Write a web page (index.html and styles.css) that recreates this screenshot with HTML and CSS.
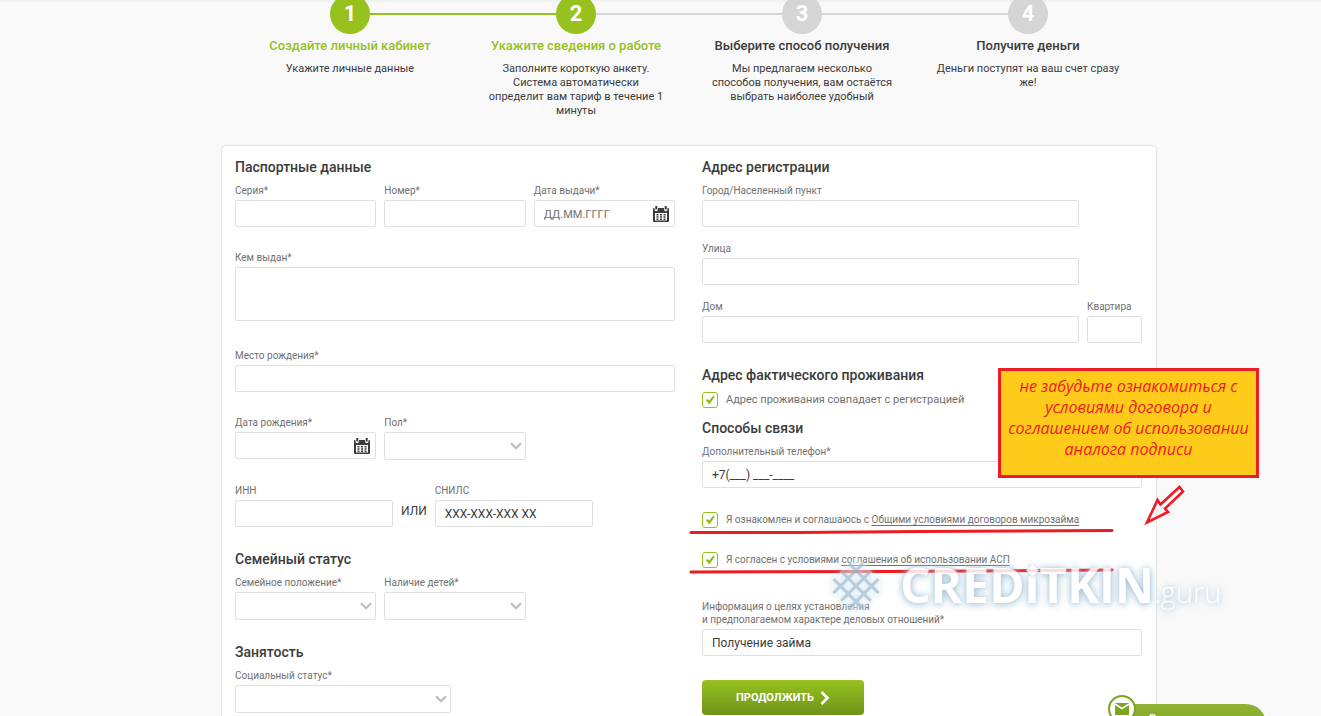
FILE: index.html
```html
<!DOCTYPE html>
<html lang="ru">
<head>
<meta charset="utf-8">
<meta name="viewport" content="width=device-width, initial-scale=1">
<title>Сведения о работе</title>
<link rel="stylesheet" href="styles.css">
</head>
<body>
<svg class="defs" width="0" height="0" aria-hidden="true">
  <symbol id="calendar" viewBox="0 0 16 16">
    <path fill="#3b3b3b" d="M1 2h.5v1.500a1.500 1.500 0 0 0 3.500 0V2h6v1.500a1.500 1.500 0 0 0 3.500 0V2h.5a1 1 0 0 1 1 1v12a1 1 0 0 1-1 1H1a1 1 0 0 1-1-1V3a1 1 0 0 1 1-1z"/>
    <path fill="#3b3b3b" d="M2.300 0h2v3.500h-2zM11.700 0h2v3.500h-2z"/>
    <path fill="#fff" d="M2 7h12v7.500H2z"/>
    <path fill="#3b3b3b" d="M3.500 8h2v1.500h-2zM7 8h2v1.500H7zM10.500 8h2v1.500h-2zM3.500 10.200h2v1.500h-2zM7 10.200h2v1.500H7zM10.500 10.200h2v1.500h-2zM3.500 12.400h2v1.500h-2zM7 12.400h2v1.500H7zM10.500 12.400h2v1.500h-2z"/>
  </symbol>
  <symbol id="chevron" viewBox="0 0 12 8">
    <path d="M1 1.200l5 5 5-5" fill="none" stroke="#bdbdbd" stroke-width="2.200"/>
  </symbol>
  <symbol id="tick" viewBox="0 0 16 16">
    <path d="M3.800 8.300l1.600-1.300 1.800 1.600L11 4l1.900.4-5.500 8.100z" fill="#8bbb1c"/>
  </symbol>
</svg>

<main class="page">
  <ol class="steps">
    <li class="step step-done step-linked">
      <span class="step-num">1</span>
      <h2 class="step-title">Создайте личный кабинет</h2>
      <p class="step-text">Укажите личные данные</p>
    </li>
    <li class="step step-done">
      <span class="step-num">2</span>
      <h2 class="step-title">Укажите сведения о работе</h2>
      <p class="step-text">Заполните короткую анкету.<br>Система автоматически<br>определит вам тариф в течение 1<br>минуты</p>
    </li>
    <li class="step">
      <span class="step-num">3</span>
      <h2 class="step-title">Выберите способ получения</h2>
      <p class="step-text">Мы предлагаем несколько<br>способов получения, вам остаётся<br>выбрать наиболее удобный</p>
    </li>
    <li class="step">
      <span class="step-num">4</span>
      <h2 class="step-title">Получите деньги</h2>
      <p class="step-text">Деньги поступят на ваш счет сразу<br>же!</p>
    </li>
  </ol>

  <form class="card">
    <div class="column">
      <h3 class="heading">Паспортные данные</h3>
      <div class="row thirds">
        <div class="field"><label for="series">Серия*</label><input class="control" id="series" type="text"></div>
        <div class="field"><label for="number">Номер*</label><input class="control" id="number" type="text"></div>
        <div class="field"><label for="issued">Дата выдачи*</label>
          <div class="control-wrap"><input class="control" id="issued" type="text" placeholder="ДД.ММ.ГГГГ"><svg class="calendar"><use href="#calendar"/></svg></div></div>
      </div>
      <div class="row row-area">
        <div class="field"><label for="issuer">Кем выдан*</label><textarea class="control area" id="issuer"></textarea></div>
      </div>
      <div class="row">
        <div class="field"><label for="birthplace">Место рождения*</label><input class="control" id="birthplace" type="text"></div>
      </div>
      <div class="row thirds">
        <div class="field"><label for="birthday">Дата рождения*</label>
          <div class="control-wrap"><input class="control" id="birthday" type="text"><svg class="calendar"><use href="#calendar"/></svg></div></div>
        <div class="field"><label for="sex">Пол*</label>
          <div class="control-wrap"><select class="control select" id="sex"><option></option></select><svg class="chevron"><use href="#chevron"/></svg></div></div>
      </div>
      <div class="row ids">
        <div class="field"><label for="inn">ИНН</label><input class="control" id="inn" type="text"></div>
        <span class="or">ИЛИ</span>
        <div class="field"><label for="snils">СНИЛС</label><input class="control" id="snils" type="text" value="XXX-XXX-XXX XX"></div>
      </div>
      <h3 class="heading">Семейный статус</h3>
      <div class="row thirds">
        <div class="field"><label for="marital">Семейное положение*</label>
          <div class="control-wrap"><select class="control select" id="marital"><option></option></select><svg class="chevron"><use href="#chevron"/></svg></div></div>
        <div class="field"><label for="children">Наличие детей*</label>
          <div class="control-wrap"><select class="control select" id="children"><option></option></select><svg class="chevron"><use href="#chevron"/></svg></div></div>
      </div>
      <h3 class="heading">Занятость</h3>
      <div class="row halves">
        <div class="field"><label for="social">Социальный статус*</label>
          <div class="control-wrap"><select class="control select" id="social"><option></option></select><svg class="chevron"><use href="#chevron"/></svg></div></div>
      </div>
    </div>

    <div class="column">
      <h3 class="heading">Адрес регистрации</h3>
      <div class="row address">
        <div class="field"><label for="city">Город/Населенный пункт</label><input class="control" id="city" type="text"></div>
      </div>
      <div class="row address">
        <div class="field"><label for="street">Улица</label><input class="control" id="street" type="text"></div>
      </div>
      <div class="row address">
        <div class="field"><label for="house">Дом</label><input class="control" id="house" type="text"></div>
        <div class="field"><label for="flat">Квартира</label><input class="control" id="flat" type="text"></div>
      </div>
      <h3 class="heading">Адрес фактического проживания</h3>
      <label class="check check-large"><span class="tickbox"><input type="checkbox" checked><svg><use href="#tick"/></svg></span><span>Адрес проживания совпадает с регистрацией</span></label>
      <h3 class="heading heading-contact">Способы связи</h3>
      <div class="row">
        <div class="field"><label for="phone">Дополнительный телефон*</label><input class="control" id="phone" type="text" value="+7(___) ___-____"></div>
      </div>
      <div class="agreements">
        <label class="check"><span class="tickbox"><input type="checkbox" checked><svg><use href="#tick"/></svg></span><span>Я ознакомлен и соглашаюсь с <a href="#terms">Общими условиями договоров микрозайма</a></span></label>
        <label class="check"><span class="tickbox"><input type="checkbox" checked><svg><use href="#tick"/></svg></span><span>Я согласен с условиями <a href="#asp">соглашения об использовании АСП</a></span></label>
      </div>
      <div class="field purpose"><label for="purpose">Информация о целях установления<br>и предполагаемом характере деловых отношений*</label><input class="control" id="purpose" type="text" value="Получение займа"></div>
      <button class="submit" type="button">ПРОДОЛЖИТЬ
        <svg width="10" height="14" viewBox="0 0 10 14"><path d="M1.500 1l6 6-6 6" fill="none" stroke="#fff" stroke-width="2.600"/></svg>
      </button>
    </div>
  </form>

  <svg class="marks" width="500" height="96" viewBox="0 0 500 96" aria-hidden="true">
    <g fill="none" stroke="#ed1c24">
      <path stroke-width="3" stroke-linecap="round" d="M2 52.500L110 52.500 230 51.500 423 50.500M2 92L200 91.500 423 90"/>
      <path stroke-width="2.600" d="M490.500 7l3.500 4.500-18 17 3 3.500-21 10.500 10.500-22.500 3 4.500z"/>
    </g>
  </svg>
  <p class="callout">не забудьте ознакомиться с<br>условиями договора и<br>соглашением об использовании<br>аналога подписи</p>

  <div class="watermark">
    <svg class="watermark-logo" width="64" height="64" viewBox="0 0 64 64" aria-hidden="true">
      <path d="M32 2l30 30-30 30L2 32z" fill="#fff" opacity=".3"/>
      <g fill="none" stroke="#9dbdd2" stroke-width="3" opacity=".85" transform="rotate(45 32 32)">
        <path d="M21 11v42M32 11v42M43 11v42M11 21h42M11 32h42M11 43h42"/>
      </g>
    </svg>
    <span class="watermark-name">CRED<span class="watermark-i">ı</span>TKIN</span><span class="watermark-zone">.guru</span>
  </div>

  <button class="chat" type="button">
    <span class="chat-icon"><svg width="14" height="12" viewBox="0 0 14 12"><path d="M0 0h14v12H0z" fill="#7da61f"/><path d="M0 1l7 4.500L14 1" fill="none" stroke="#fff" stroke-width="1.500"/></svg></span>
    <span class="chat-text">Отправить</span>
  </button>
</main>
</body>
</html>
```

FILE: styles.css
```css
* {
  box-sizing: border-box;
}

body {
  margin: 0;
  height: 100vh;
  overflow: hidden;
  padding: 0 0 0 57px;
  background: #f9f9f9;
  box-shadow: inset 0 3px 3px -2px #ececec;
  color: #3b3b3b;
  font-family: Roboto, "Liberation Sans", sans-serif;
  font-size: 12px;
}

.defs {
  position: absolute;
}

h2,
h3,
p {
  margin: 0;
}

.page {
  position: relative;
  max-width: 936px;
  margin: 0 auto;
}

/* Progress */
.steps {
  display: grid;
  grid-template-columns: repeat(4, 1fr);
  min-height: 145px;
  margin: 0;
  padding: 0 16px;
  list-style: none;
  text-align: center;
}

.step {
  position: relative;
  margin-top: -6px;
}

.step:not(:last-child)::after {
  content: "";
  position: absolute;
  top: 19px;
  left: calc(50% + 20px);
  width: calc(100% - 40px);
  height: 2px;
  background: #d5d5d5;
}

.step-linked:not(:last-child)::after {
  background: #96c11f;
}

.step-num {
  display: block;
  width: 40px;
  height: 40px;
  margin: 0 auto;
  border-radius: 50%;
  background: #d5d5d5;
  color: #fff;
  font-size: 22px;
  font-weight: 700;
  line-height: 40px;
}

.step-done .step-num {
  background: #96c11f;
}

.step-title {
  margin-top: 3px;
  font-size: 13px;
  font-weight: 500;
  line-height: 18px;
}

.step-done .step-title {
  color: #96c11f;
}

.step-text {
  margin-top: 7px;
  font-size: 11px;
  line-height: 14px;
}

/* Form */
.card {
  display: grid;
  grid-template-columns: 1fr 1fr;
  gap: 27px;
  padding: 11px 14px 40px 13px;
  border: 1px solid #e4e4e4;
  border-radius: 5px;
  background: #fff;
}

.heading {
  margin: 22px 0 7px;
  font-size: 14px;
  font-weight: 500;
  line-height: 20px;
}

.heading:first-child {
  margin-top: 0;
}

.row {
  display: grid;
  align-items: start;
  gap: 8px;
}

.row + .row {
  margin-top: 24px;
}

.row-area + .row {
  margin-top: 28px;
}

.thirds {
  grid-template-columns: repeat(3, 1fr);
}

.halves {
  grid-template-columns: 216px;
}

.ids {
  grid-template-columns: 158px auto 158px;
  justify-content: start;
}

.or {
  align-self: end;
  padding-bottom: 8px;
  line-height: 15px;
}

.address {
  grid-template-columns: 1fr 55px;
}

.address + .address {
  margin-top: 15px;
}

.field > label {
  display: block;
  margin-bottom: 2px;
  color: #707070;
  font-size: 10px;
  line-height: 14px;
  white-space: nowrap;
}

.control {
  display: block;
  width: 100%;
  height: 27px;
  margin: 0;
  padding: 0 9px;
  border: 1px solid #e0e0e0;
  border-radius: 2px;
  background: #fff;
  color: #3b3b3b;
  font: 12px Roboto, "Liberation Sans", sans-serif;
  outline: 0;
}

.control::placeholder {
  color: #707070;
  font-size: 11px;
}

.area {
  height: 54px;
  resize: none;
}

.select {
  height: 28px;
  appearance: none;
}

.control-wrap {
  position: relative;
}

.calendar {
  position: absolute;
  top: 6px;
  right: 6px;
  width: 16px;
  height: 16px;
}

.chevron {
  position: absolute;
  top: 10px;
  right: 4px;
  width: 12px;
  height: 8px;
  pointer-events: none;
}

.check {
  display: flex;
  align-items: flex-start;
  gap: 8px;
  height: 16px;
  color: #707070;
  font-size: 10px;
  line-height: 15px;
  white-space: nowrap;
}

.check-large {
  font-size: 11px;
}

.check a {
  color: inherit;
  text-underline-offset: 2px;
}

.tickbox {
  position: relative;
  width: 16px;
  height: 16px;
}

.tickbox input {
  display: block;
  width: 16px;
  height: 16px;
  margin: 0;
  border: 1px solid #96c11f;
  border-radius: 3px;
  background: #fff;
  appearance: none;
}

.tickbox svg {
  position: absolute;
  inset: 0;
  width: 16px;
  height: 16px;
  pointer-events: none;
}

.heading-contact {
  margin-top: 10px;
}

.agreements {
  display: grid;
  gap: 24px;
  margin: 24px 0 32px;
}

.purpose > label {
  margin-bottom: 3px;
  line-height: 13px;
}

.submit {
  display: flex;
  align-items: center;
  justify-content: center;
  gap: 6px;
  width: 162px;
  height: 35px;
  margin-top: 24px;
  border: 0;
  border-radius: 4px;
  background: linear-gradient(#96c11f, #6f931b);
  color: #fff;
  font: 700 11px Roboto, "Liberation Sans", sans-serif;
}

/* Notes drawn over the form */
.marks {
  position: absolute;
  top: 480px;
  left: 468px;
}

.callout {
  position: absolute;
  top: 368px;
  left: 777px;
  width: 261px;
  min-height: 110px;
  padding: 5px 0;
  border: 3px solid #ed1c24;
  background: #ffcb1a;
  color: #ed1c24;
  font: italic 16px/21px "Open Sans", "Noto Sans", sans-serif;
  text-align: center;
  white-space: nowrap;
}

.watermark {
  position: absolute;
  top: 554px;
  left: 603px;
  display: flex;
  align-items: baseline;
  color: #fff;
  font-family: "Open Sans", "Noto Sans", sans-serif;
  line-height: 62px;
  white-space: nowrap;
  opacity: 0.85;
  text-shadow: 0 1px 9px #8fb3ca, 0 0 5px #c5d9e6;
  pointer-events: none;
}

.watermark-logo {
  align-self: flex-start;
  margin-right: 12px;
  filter: drop-shadow(0 0 3px #c5d9e6);
}

.watermark-name {
  font-size: 48px;
  font-weight: 700;
}

.watermark-i {
  position: relative;
}

.watermark-i::before {
  content: "";
  position: absolute;
  top: 14px;
  left: 50%;
  width: 9px;
  height: 9px;
  margin-left: -4px;
  background: #fff;
  box-shadow: 0 0 5px #a5c3d6;
  transform: rotate(45deg);
}

.watermark-zone {
  font-size: 29px;
  font-weight: 300;
}

.chat {
  position: absolute;
  top: 704px;
  left: 888px;
  display: flex;
  width: 157px;
  height: 40px;
  padding: 0;
  border: 0;
  border-radius: 20px;
  background: linear-gradient(#8fb236, #7da61f);
  color: #fff;
  font: 500 13px/16px Roboto, "Liberation Sans", sans-serif;
}

.chat-icon {
  display: flex;
  align-items: center;
  justify-content: center;
  width: 28px;
  height: 28px;
  margin: -9px 12px 0 -1px;
  border: 2px solid #7da61f;
  border-radius: 50%;
  background: #fff;
}

.chat-text {
  margin-top: 7px;
}
```
